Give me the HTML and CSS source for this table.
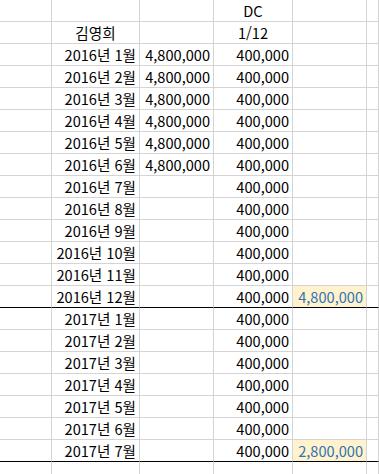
FILE: index.html
```html
<!DOCTYPE html>
<html lang="ko">
<head>
<meta charset="utf-8">
<link rel="stylesheet" href="styles.css">
</head>
<body>
<div class="sheet">
  <div class="row"><div class="c"></div><div class="c"></div><div class="c"></div><div class="c ctr">DC</div><div class="c"></div><div class="c"></div></div>
  <div class="row"><div class="c"></div><div class="c ctr">김영희</div><div class="c"></div><div class="c ctr">1/12</div><div class="c"></div><div class="c"></div></div>
  <div class="row"><div class="c"></div><div class="c">2016년 1월</div><div class="c">4,800,000</div><div class="c">400,000</div><div class="c"></div><div class="c"></div></div>
  <div class="row"><div class="c"></div><div class="c">2016년 2월</div><div class="c">4,800,000</div><div class="c">400,000</div><div class="c"></div><div class="c"></div></div>
  <div class="row"><div class="c"></div><div class="c">2016년 3월</div><div class="c">4,800,000</div><div class="c">400,000</div><div class="c"></div><div class="c"></div></div>
  <div class="row"><div class="c"></div><div class="c">2016년 4월</div><div class="c">4,800,000</div><div class="c">400,000</div><div class="c"></div><div class="c"></div></div>
  <div class="row"><div class="c"></div><div class="c">2016년 5월</div><div class="c">4,800,000</div><div class="c">400,000</div><div class="c"></div><div class="c"></div></div>
  <div class="row"><div class="c"></div><div class="c">2016년 6월</div><div class="c">4,800,000</div><div class="c">400,000</div><div class="c"></div><div class="c"></div></div>
  <div class="row"><div class="c"></div><div class="c">2016년 7월</div><div class="c"></div><div class="c">400,000</div><div class="c"></div><div class="c"></div></div>
  <div class="row"><div class="c"></div><div class="c">2016년 8월</div><div class="c"></div><div class="c">400,000</div><div class="c"></div><div class="c"></div></div>
  <div class="row"><div class="c"></div><div class="c">2016년 9월</div><div class="c"></div><div class="c">400,000</div><div class="c"></div><div class="c"></div></div>
  <div class="row"><div class="c"></div><div class="c">2016년 10월</div><div class="c"></div><div class="c">400,000</div><div class="c"></div><div class="c"></div></div>
  <div class="row"><div class="c"></div><div class="c">2016년 11월</div><div class="c"></div><div class="c">400,000</div><div class="c"></div><div class="c"></div></div>
  <div class="row total"><div class="c"></div><div class="c">2016년 12월</div><div class="c"></div><div class="c">400,000</div><div class="c hl">4,800,000</div><div class="c"></div></div>
  <div class="row"><div class="c"></div><div class="c">2017년 1월</div><div class="c"></div><div class="c">400,000</div><div class="c"></div><div class="c"></div></div>
  <div class="row"><div class="c"></div><div class="c">2017년 2월</div><div class="c"></div><div class="c">400,000</div><div class="c"></div><div class="c"></div></div>
  <div class="row"><div class="c"></div><div class="c">2017년 3월</div><div class="c"></div><div class="c">400,000</div><div class="c"></div><div class="c"></div></div>
  <div class="row"><div class="c"></div><div class="c">2017년 4월</div><div class="c"></div><div class="c">400,000</div><div class="c"></div><div class="c"></div></div>
  <div class="row"><div class="c"></div><div class="c">2017년 5월</div><div class="c"></div><div class="c">400,000</div><div class="c"></div><div class="c"></div></div>
  <div class="row"><div class="c"></div><div class="c">2017년 6월</div><div class="c"></div><div class="c">400,000</div><div class="c"></div><div class="c"></div></div>
  <div class="row total"><div class="c"></div><div class="c">2017년 7월</div><div class="c"></div><div class="c">400,000</div><div class="c hl">2,800,000</div><div class="c"></div></div>
  <div class="row"><div class="c"></div><div class="c"></div><div class="c"></div><div class="c"></div><div class="c"></div><div class="c"></div></div>
</div>
</body>
</html>
```

FILE: styles.css
```css
html, body {
  margin: 0;
  padding: 0;
  background: #ffffff;
}
.sheet {
  width: 379px;
  height: 474px;
  overflow: hidden;
  font-family: "Noto Sans CJK KR", sans-serif;
  font-size: 14.6px;
  color: #000000;
}
.row {
  display: grid;
  grid-template-columns: 52px 88px 74px 79px 74px 1fr;
  height: 22px;
}
.c {
  box-sizing: border-box;
  height: 22px;
  border-right: 1px solid #d4d4d4;
  border-bottom: 1px solid #d4d4d4;
  text-align: right;
  padding: 0 3px 0 0;
  line-height: 21px;
  white-space: nowrap;
  overflow: hidden;
}
.c.ctr {
  text-align: center;
  padding: 0;
}
.row.total .c {
  border-bottom-color: #000000;
}
.c.hl {
  background: #fff2cc;
  color: #2f75b5;
}
```
